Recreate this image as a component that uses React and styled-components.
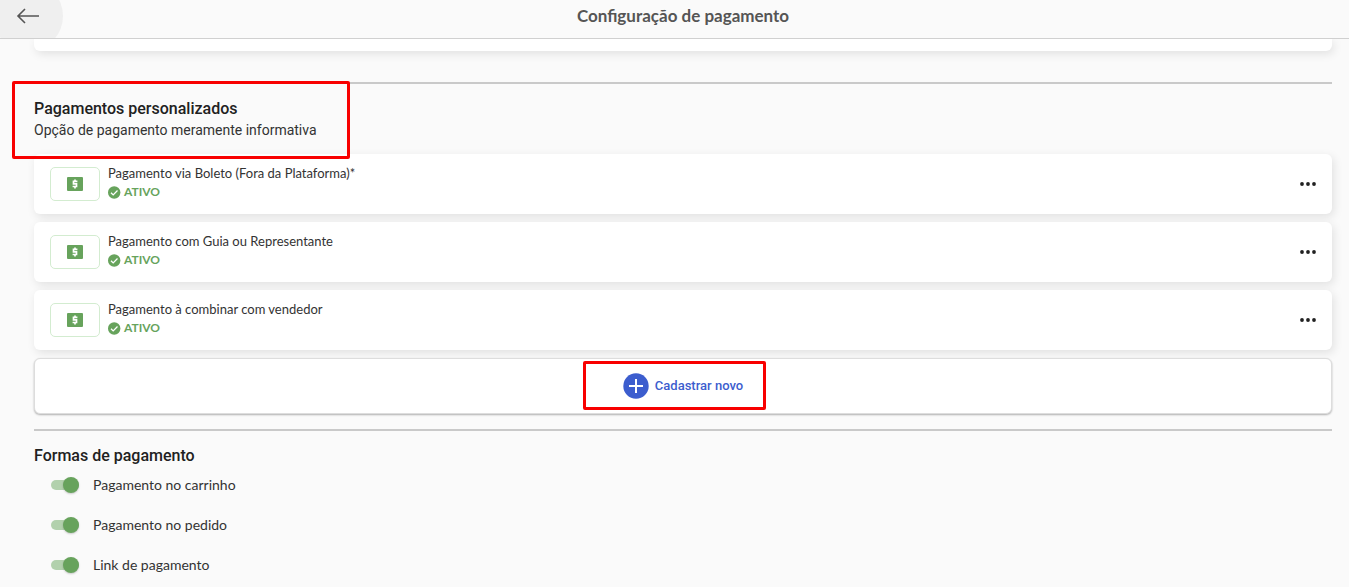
import React from "react"
import styled, { createGlobalStyle } from "styled-components"

const GlobalStyle = createGlobalStyle`
  * {
    box-sizing: border-box;
  }
  body {
    margin: 0;
    background: #fafafa;
    color: #212121;
    font-family: Roboto, sans-serif;
    overflow: hidden;
  }
`

const Header = styled.header`
  display: flex;
  align-items: center;
  height: 39px;
  padding: 0 17px 6px 34px;
  border-bottom: 1px solid #d0d0d0;
  overflow: hidden;
`

const BackButton = styled.button`
  display: flex;
  flex: none;
  align-items: center;
  justify-content: center;
  width: 70px;
  height: 70px;
  margin: 0 -29px 0 -41px;
  padding: 0;
  border: 0;
  border-radius: 50%;
  background: #efefef;
  color: #555;
`

const Title = styled.h1`
  flex: 1;
  margin: 0;
  color: #555;
  font: 700 17px/24px Lato, sans-serif;
  text-align: center;
`

const Main = styled.main`
  padding: 0 17px 0 34px;
`

const Card = styled.li`
  display: flex;
  align-items: center;
  height: 60px;
  padding: 0 16px;
  border-radius: 6px;
  background: #fff;
  box-shadow: 2px 3px 10px rgba(0, 0, 0, 0.1);
`

const CardEnd = styled.div`
  height: 12px;
  border-radius: 0 0 6px 6px;
  background: #fff;
  box-shadow: 2px 3px 10px rgba(0, 0, 0, 0.1);
  clip-path: inset(0 -16px -16px -16px);
`

const Rule = styled.hr`
  height: 2px;
  margin: ${(props) => props.$top}px 0 0;
  border: 0;
  background: #c9c9c9;
`

const Intro = styled.div`
  position: relative;
  height: 70px;
  padding-top: 14px;
`

const SectionTitle = styled.h2`
  margin: 0;
  font-size: 16px;
  font-weight: 500;
  line-height: 22px;
`

const Subtitle = styled.p`
  margin: 0;
  color: #333;
  font-size: 14px;
  line-height: 20px;
`

const Highlight = styled.span`
  position: absolute;
  z-index: 1;
  border: 3px solid #f80000;
  border-radius: 2px;
  pointer-events: none;
`

const IntroHighlight = styled(Highlight)`
  top: -3px;
  left: -22px;
  width: 338px;
  height: 78px;
`

const AddHighlight = styled(Highlight)`
  top: 2px;
  left: calc(50% - 100px);
  width: 183px;
  height: 49px;
`

const List = styled.ul`
  display: grid;
  gap: 8px;
  margin: 0;
  padding: 0;
  list-style: none;
`

const Thumb = styled.span`
  display: flex;
  align-items: center;
  justify-content: center;
  width: 50px;
  height: 34px;
  margin-right: 8px;
  border: 1px solid #d3ecd0;
  border-radius: 5px;
`

const Details = styled.div`
  flex: 1;
  height: 44px;
  font-family: Lato, sans-serif;
`

const Name = styled.div`
  color: #333;
  font-size: 13px;
  line-height: 22px;
`

const Status = styled.div`
  display: flex;
  align-items: center;
  gap: 3px;
  color: #67a35c;
  font-size: 12px;
  font-weight: 700;
  line-height: 16px;
`

const MoreButton = styled.button`
  display: flex;
  padding: 0;
  border: 0;
  background: none;
  color: #212121;
`

const AddButton = styled.button`
  position: relative;
  display: flex;
  align-items: center;
  justify-content: center;
  gap: 6px;
  width: 100%;
  height: 56px;
  margin-top: 8px;
  border: 1px solid #ddd;
  border-radius: 6px;
  background: #fff;
  box-shadow: 0 1px 2px rgba(0, 0, 0, 0.3);
  color: #3c5dce;
  font: 500 13px/20px Roboto, sans-serif;
`

const Methods = styled.section`
  padding-top: 14px;
`

const Option = styled.label`
  display: flex;
  align-items: center;
  gap: 14px;
  height: 40px;
  padding-left: 17px;
  color: #333;
  font: 14px/20px Lato, sans-serif;
`

const Options = styled.div`
  margin-top: -2px;
`

const Switch = styled.input`
  appearance: none;
  display: flex;
  align-items: center;
  width: 28px;
  height: 10px;
  margin: 0;
  border-radius: 5px;
  background: #b2d1ad;

  &::before {
    content: "";
    width: 16px;
    height: 16px;
    border-radius: 50%;
    background: #67a35c;
    box-shadow: 0 1px 2px rgba(0, 0, 0, 0.2);
  }

  &:checked::before {
    margin-left: auto;
  }
`

const BackIcon = () => (
  <svg width="24" height="18" viewBox="0 0 24 18" fill="none" stroke="currentColor" strokeWidth="1.6">
    <path d="M23 9H2M9 2L2 9l7 7" />
  </svg>
)

const MoneyIcon = () => (
  <svg width="16" height="14" viewBox="0 0 16 14">
    <rect width="16" height="14" rx="1" fill="#67a35c" />
    <path d="M10.4 4.4H6.5v2.5h3v2.6H5.6M8 2.6v1.8M8 9.5v1.9" fill="none" stroke="#fff" strokeWidth="1.7" />
  </svg>
)

const CheckIcon = () => (
  <svg width="13" height="13" viewBox="0 0 13 13">
    <circle cx="6.2" cy="6.5" r="6.2" fill="#67a35c" />
    <path d="M3 6.7l2.2 2.2 4.3-4.4" fill="none" stroke="#fff" strokeWidth="1.3" />
  </svg>
)

const MoreIcon = () => (
  <svg width="16" height="4" viewBox="0 0 16 4" fill="currentColor">
    <circle cx="2" cy="2" r="1.9" />
    <circle cx="8" cy="2" r="1.9" />
    <circle cx="14" cy="2" r="1.9" />
  </svg>
)

const PlusIcon = () => (
  <svg width="26" height="26" viewBox="0 0 26 26">
    <circle cx="13" cy="13" r="12.7" fill="currentColor" />
    <path d="M13 6v14M6 13h14" stroke="#fff" strokeWidth="2" />
  </svg>
)

const payments = [
  "Pagamento via Boleto (Fora da Plataforma)*",
  "Pagamento com Guia ou Representante",
  "Pagamento à combinar com vendedor",
]

const methods = ["Pagamento no carrinho", "Pagamento no pedido", "Link de pagamento"]

const PaymentCard = ({ name }) => (
  <Card>
    <Thumb>
      <MoneyIcon />
    </Thumb>
    <Details>
      <Name>{name}</Name>
      <Status>
        <CheckIcon />
        ATIVO
      </Status>
    </Details>
    <MoreButton aria-label="Mais opções">
      <MoreIcon />
    </MoreButton>
  </Card>
)

const App = () => (
  <>
    <GlobalStyle />
    <Header>
      <BackButton aria-label="Voltar">
        <BackIcon />
      </BackButton>
      <Title>Configuração de pagamento</Title>
    </Header>
    <Main>
      <CardEnd />
      <Rule $top={31} />
      <section>
        <Intro>
          <SectionTitle>Pagamentos personalizados</SectionTitle>
          <Subtitle>Opção de pagamento meramente informativa</Subtitle>
          <IntroHighlight />
        </Intro>
        <List>
          {payments.map((name) => (
            <PaymentCard key={name} name={name} />
          ))}
        </List>
        <AddButton>
          <PlusIcon />
          Cadastrar novo
          <AddHighlight />
        </AddButton>
      </section>
      <Rule $top={15} />
      <Methods>
        <SectionTitle>Formas de pagamento</SectionTitle>
        <Options>
          {methods.map((name) => (
            <Option key={name}>
              <Switch type="checkbox" role="switch" defaultChecked />
              {name}
            </Option>
          ))}
        </Options>
      </Methods>
    </Main>
  </>
)

export default App
